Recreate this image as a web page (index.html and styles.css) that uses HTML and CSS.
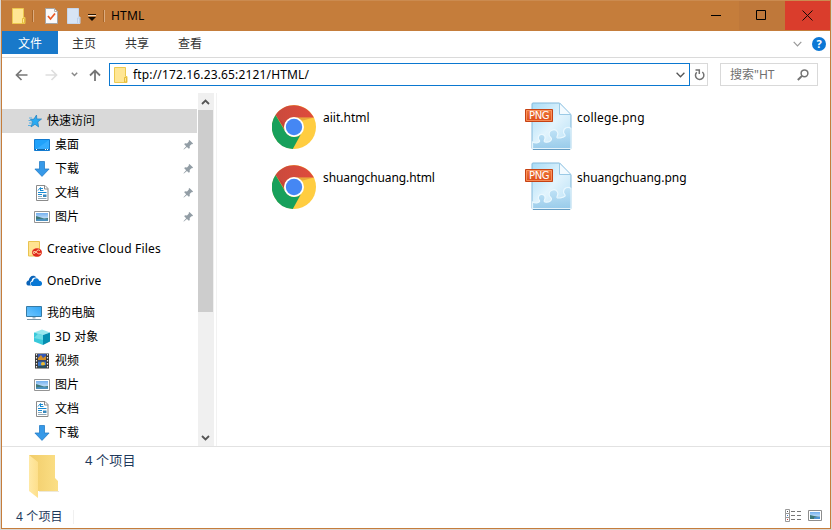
FILE: index.html
```
<!DOCTYPE html>
<html lang="zh-CN">
<head>
<meta charset="utf-8">
<title>HTML</title>
<link rel="stylesheet" href="styles.css">
</head>
<body>
<svg class="defs" aria-hidden="true">
  <defs>
    <linearGradient id="gFolder" x1="0" x2="1"><stop offset="0" stop-color="#f1cc69"/><stop offset="1" stop-color="#fbdf86"/></linearGradient>
    <linearGradient id="gFlap" x1="0" x2="1"><stop offset="0" stop-color="#ffe9a6"/><stop offset="1" stop-color="#fddf8b"/></linearGradient>
    <linearGradient id="gPage" x1="0" y1="0" x2="1" y2="1"><stop offset="0" stop-color="#a9dcf7"/><stop offset=".5" stop-color="#e2f4fd"/><stop offset="1" stop-color="#b4def5"/></linearGradient>
    <linearGradient id="gPuzzle" x1="0" y1="0" x2="0" y2="1"><stop offset="0" stop-color="#c0e3f7"/><stop offset="1" stop-color="#93c8e9"/></linearGradient>
    <linearGradient id="gBadge" x1="0" y1="0" x2="0" y2="1"><stop offset="0" stop-color="#f07a3c"/><stop offset="1" stop-color="#dc4b17"/></linearGradient>
    <linearGradient id="gScreen" x1="0" y1="1" x2="1" y2="0"><stop offset="0" stop-color="#72c8ff"/><stop offset="1" stop-color="#2fa4f5"/></linearGradient>
    <linearGradient id="gSky" x1="0" y1="0" x2="0" y2="1"><stop offset="0" stop-color="#73b0ef"/><stop offset="1" stop-color="#e8f4fb"/></linearGradient>
    <linearGradient id="gRed" x1="0" y1="0" x2="1" y2="0"><stop offset="0" stop-color="#c94a3d"/><stop offset="1" stop-color="#e04b3c"/></linearGradient>
  </defs>
  <symbol id="folder" viewBox="0 0 14 16"><path d="M.5.5h11v9h1.500v6H.5z" fill="#ffe694" stroke="#ecc94f"/><path d="M10.500 15V10.500h2V15z" fill="#ffe694" stroke="#e5bd3d"/></symbol>
  <symbol id="star" viewBox="0 0 16 16"><path d="M10.500 2l.3 4 4.700 0-3.700 2.900.8 5-3.600-2.600-4 2.600 1.700-4.700L4.500 6.500l3.500-.4z" fill="#2aaaf2" stroke="#2685c4" stroke-width=".8"/><path d="M3 5h3M2.500 7.500h3M3 10h3M2 12.500h3" stroke="#5aaee0"/></symbol>
  <symbol id="desktop" viewBox="0 0 16 16"><path d="M.5 2.500h15v11H.5z" fill="#20a2fb" stroke="#137bd0"/><path d="M1 13L15 3v10z" fill="#35adff"/><path d="M1 12.500h14" stroke="#1267a8"/><path d="M2 12.500h1M11 12.500h1M13 12.500h1" stroke="#fff"/></symbol>
  <symbol id="down" viewBox="0 0 16 16"><path d="M5.500.5h5v7.500h4.600L8 15.400.9 8h4.600z" fill="#3699e8" stroke="#277dc7" stroke-width=".8"/></symbol>
  <symbol id="doc" viewBox="0 0 16 16"><path d="M2.500.5h8.500l3 3v12H2.500z" fill="#fff" stroke="#8b8b8b"/><path d="M10.500.5V4H14" fill="none" stroke="#8b8b8b"/><path d="M7 3.500h2M6.500 5.500h3M4 7.500h8.500M4 9.500h4" stroke="#198bd3"/><path d="M4 5.500l2.500-3v3.500" fill="none" stroke="#198bd3"/><path d="M4 11.500h4M4 13.500h8.500" stroke="#8fa8b8"/><path d="M9 9.500h3.500v2.500H9z" fill="#3988bd"/></symbol>
  <symbol id="photo" viewBox="0 0 16 16"><path d="M.5 2.500h15v11H.5z" fill="#fff" stroke="#949494"/><path d="M2 4h12v8H2z" fill="url(#gSky)"/><path d="M2 7l4 1.200 4 1.300 4-.6V12H2z" fill="#3f7878"/><path d="M2 10.500q6-1.500 12 0V12H2z" fill="#4c91bf"/></symbol>
  <symbol id="ccloud" viewBox="0 0 16 16"><path d="M2.500.5h11v14.500h-11z" fill="#ffe391" stroke="#e9c350"/><ellipse cx="11" cy="11.500" rx="5" ry="4.200" fill="#df291d"/><path d="M14 9.500q-2-1.500-3.500.5l-1.200 2q-1.300 1-2.200 0 .1-2.500 2.700-1.200l2.500 2q2.400.7 2.700-1.100" fill="none" stroke="#ffd4a2" stroke-width="1"/></symbol>
  <symbol id="onedrive" viewBox="0 1 16 16"><path d="M3 13.500C-.5 13.500-.4 9 2.700 8.500 3 4.500 7.500 1.700 10.500 5.500 6.800 5 5.600 7 5.700 8.700 3.800 9.500 3.700 12 5 13.500z" fill="#0a63b8"/><path d="M6.500 14c-2.800-.8-2.300-4.200.5-4.400.3-4.200 5.200-4.400 6.200-.9 3.700.2 3.700 4.900.5 5.300z" fill="#0878d5"/></symbol>
  <symbol id="pc" viewBox="0 0 16 16"><path d="M.5 1.500h15v10H.5z" fill="url(#gScreen)" stroke="#367ba5"/><path d="M6.500 12h3v1.500h-3z" fill="#a1b4c0"/><path d="M1 14.500h14" stroke="#7894a6"/></symbol>
  <symbol id="cube" viewBox="0 0 16 16"><path d="M0 3.500L8 .5l8 3L9 6z" fill="#9ae9ef"/><path d="M0 3.500L9 6v10l-9-3.500z" fill="#39c9db"/><path d="M9 6l7-2.500v9L9 16z" fill="#058fb1"/><path d="M0 9l4-4.200L9 6v5z" fill="#6edce6"/></symbol>
  <symbol id="film" viewBox="0 0 16 16"><path d="M1 .5h14v15H1z" fill="#383838"/><path d="M4 1h8v6.500H4z" fill="#3258b7"/><path d="M4 8.500h8V15H4z" fill="#3975cc"/><path d="M4 5l3-3 2 3 3-2v4H4z" fill="#d08d26"/><circle cx="9" cy="11" r="2" fill="#f0bd2f"/><path d="M4 13l8-1v3H4z" fill="#284f60"/><path d="M2.500 1v14M13.500 1v14" stroke="#eee" stroke-width="1.200" stroke-dasharray="1.500 1.500"/></symbol>
  <symbol id="pin" viewBox="0 0 12 12"><path d="M7 1l4 4-1 .8-.8-.1-1.900 2 .1 2.100-1 .9L4.300 8.600 1 11.500l-.5-.4L3.500 7.800 1.300 5.600l.9-.9 2.200.1 2-2L6.200 1.800z" fill="#929da5"/></symbol>
  <symbol id="chrome" viewBox="0 0 44 44"><circle cx="22" cy="22" r="22" fill="#ffcd41"/><path d="M3.500 10A22 22 0 0 1 40.500 10.500L42 12.500H22a9.500 9.500 0 0 0-9 12.500z" fill="url(#gRed)"/><path d="M3.500 10L13 26q3.500 6 9 6 5 0 7-3l-8.200 15A22 22 0 0 1 3.500 10z" fill="#17a05b"/><path d="M22 12.500h20l-13 3.500zM13 26L6 13l6 5z" fill="#a93228" opacity=".25"/><circle cx="22" cy="22" r="10" fill="#fff"/><circle cx="22" cy="22" r="8.200" fill="#4587f4"/></symbol>
  <symbol id="png" viewBox="0 0 48 48"><path d="M8 1h26.500L46 13v33.500q0 .5-1 .5H8q-1 0-1-1V2q0-1 1-1z" fill="url(#gPage)" stroke="#83b9db"/><path d="M7.500 46.500V40q4 2 6.500 0c1.500-1 0-2-.5-3-1.500-6 7.500-6 6.500-.5-.5 1.500-1.500 3 0 3.500 2.500.5 5.500-.5 6.500-2.500.5-1.500-1-2-2-3.500-2-5.500 5.500-8.500 8-4 1.500 3-1 4-.5 5.500.5 1 6 .5 8-1.500 1-1.500-1.500-2-1.500-4 0-4 4.500-6 7.500-3.500v20z" fill="url(#gPuzzle)" opacity=".85" stroke="#eefaff" stroke-width="1.200"/><path d="M34.500 1v11.500H46z" fill="#f4fbff" stroke="#9bcae6"/><path d="M8 47.500h37" stroke="#659dc4"/><path d="M.5 7.500h27v12H.5z" fill="url(#gBadge)" stroke="#c64213"/><path d="M1.500 8.500h25v10h-25z" fill="none" stroke="#ffa572" stroke-width=".7"/></symbol>
</svg>

<div class="window">
  <header class="titlebar">
    <svg class="tb-folder"><use href="#folder"/></svg>
    <i class="tb-sep"></i>
    <svg class="tb-check" viewBox="0 0 13 16"><path d="M.5.5h9l3 3v12H.5z" fill="#fafafa" stroke="#a6a6a6"/><path d="M9.500.5v3h3" fill="none" stroke="#b4b4b4"/><path d="M3 8l2.500 3 4.500-5.500" fill="none" stroke="#e85a27" stroke-width="1.700"/></svg>
    <svg class="tb-blue" viewBox="0 0 14 16"><path d="M.5.500h11v8.500h1.500v6.500H.5z" fill="#d7e4f5" stroke="#c6d6ec"/><path d="M10.500 15v-5h2v5" fill="none" stroke="#bdcfe8"/></svg>
    <svg class="tb-menu" viewBox="0 0 8 8"><path d="M0 1.500h8" stroke="#2c1600"/><path d="M0 2.500h8" stroke="#f0dac5"/><path d="M0 4h8L4 8z" fill="#160b00"/></svg>
    <i class="tb-sep"></i>
    <span class="title">HTML</span>
    <div class="caption">
      <span class="cap"><svg viewBox="0 0 11 11"><path d="M0 5.500h10" stroke="#000"/></svg></span>
      <span class="cap cap-max"><svg viewBox="0 0 11 11"><path d="M.5.5h9v9h-9z" fill="none" stroke="#000"/></svg></span>
      <span class="cap cap-close"><svg viewBox="0 0 11 11"><path d="M.5.5l10 10M10.500.5l-10 10" stroke="#180b08"/></svg></span>
    </div>
  </header>

  <nav class="tabs">
    <span class="tab active">文件</span><span class="tab">主页</span><span class="tab">共享</span><span class="tab">查看</span>
    <svg class="expand" viewBox="0 0 9 6"><path d="M.7.8l3.800 4 3.800-4" fill="none" stroke="#999" stroke-width="1.200"/></svg>
    <span class="help">?</span>
  </nav>

  <div class="navrow">
    <svg class="back" viewBox="0 0 13 12"><path d="M12.500 6H1.500M6.500 1l-5 5 5 5" fill="none" stroke="#777" stroke-width="1.700"/></svg>
    <svg class="forward" viewBox="0 0 13 12"><path d="M.5 6h11M6.500 1l5 5-5 5" fill="none" stroke="#dedede" stroke-width="1.700"/></svg>
    <svg class="recent" viewBox="0 0 7 5"><path d="M.8.8l2.700 2.700L6.200.8" fill="none" stroke="#888" stroke-width="1.500"/></svg>
    <svg class="up" viewBox="0 0 12 12"><path d="M6 12V1.500M1 6.500l5-5 5 5" fill="none" stroke="#777" stroke-width="1.800"/></svg>
    <div class="address"><svg class="addr-icon"><use href="#folder"/></svg><span class="url">ftp://172.16.23.65:2121/HTML/</span><svg class="addr-drop" viewBox="0 0 9 6"><path d="M.6.7l3.900 4 3.900-4" fill="none" stroke="#555" stroke-width="1.300"/></svg></div>
    <div class="refresh"><svg viewBox="0 0 11 12"><path d="M2.800 3.200A4.200 4.200 0 1 0 8.300 3" fill="none" stroke="#727272" stroke-width="1.500"/><path d="M1.500.9h3.800v4" fill="none" stroke="#727272" stroke-width="1.500"/></svg></div>
    <div class="search"><span>搜索"HT</span><svg viewBox="0 0 12 12"><circle cx="7.500" cy="4.300" r="3.400" fill="none" stroke="#737373" stroke-width="1.500"/><path d="M5 6.900L.8 11" stroke="#737373" stroke-width="2"/></svg></div>
  </div>

  <div class="body">
    <aside class="tree">
      <div class="row root selected"><svg><use href="#star"/></svg><span>快速访问</span></div>
      <div class="row"><svg><use href="#desktop"/></svg><span>桌面</span><svg class="pin"><use href="#pin"/></svg></div>
      <div class="row"><svg><use href="#down"/></svg><span>下载</span><svg class="pin"><use href="#pin"/></svg></div>
      <div class="row"><svg><use href="#doc"/></svg><span>文档</span><svg class="pin"><use href="#pin"/></svg></div>
      <div class="row"><svg><use href="#photo"/></svg><span>图片</span><svg class="pin"><use href="#pin"/></svg></div>
      <div class="row root gap"><svg><use href="#ccloud"/></svg><span class="cc">Creative Cloud Files</span></div>
      <div class="row root gap"><svg><use href="#onedrive"/></svg><span class="od">OneDrive</span></div>
      <div class="row root gap"><svg><use href="#pc"/></svg><span>我的电脑</span></div>
      <div class="row"><svg><use href="#cube"/></svg><span class="od">3D 对象</span></div>
      <div class="row"><svg><use href="#film"/></svg><span>视频</span></div>
      <div class="row"><svg><use href="#photo"/></svg><span>图片</span></div>
      <div class="row"><svg><use href="#doc"/></svg><span>文档</span></div>
      <div class="row"><svg><use href="#down"/></svg><span>下载</span></div>
    </aside>
    <div class="scrollbar">
      <svg viewBox="0 0 9 6"><path d="M1 5l3.500-3.500L8 5" fill="none" stroke="#555" stroke-width="1.800"/></svg>
      <i class="thumb"></i>
      <svg class="sb-down" viewBox="0 0 9 6"><path d="M1 1l3.500 3.500L8 1" fill="none" stroke="#555" stroke-width="1.800"/></svg>
    </div>
    <main class="files">
      <div class="file"><svg class="chrome"><use href="#chrome"/></svg><span>aiit.html</span></div>
      <div class="file"><svg class="png"><use href="#png"/><text x="4" y="17" textLength="20.500" lengthAdjust="spacing" class="png-text">PNG</text></svg><span class="wide">college.png</span></div>
      <div class="file"><svg class="chrome"><use href="#chrome"/></svg><span class="tight">shuangchuang.html</span></div>
      <div class="file"><svg class="png"><use href="#png"/><text x="4" y="17" textLength="20.500" lengthAdjust="spacing" class="png-text">PNG</text></svg><span>shuangchuang.png</span></div>
    </main>
  </div>

  <section class="details">
    <svg class="big-folder" viewBox="0 0 32 46"><path d="M1 1h26v23l3 3v10H9z" fill="url(#gFolder)"/><path d="M1 1l9 7v36L1 37z" fill="url(#gFlap)"/><path d="M11 37.500h20" stroke="#ede8da"/></svg>
    <span class="count">4 个项目</span>
  </section>
  <footer class="status">
    <span class="status-text">4 个项目</span>
    <svg class="view-list" viewBox="0 0 16 13"><path d="M.5.5h4v4h-4zM.5 4.500h4v4h-4zM.5 8.500h4v4h-4z" fill="#fff" stroke="#999"/><path d="M6 2.500h4M12 2.500h4M6 6.500h4M12 6.500h4M6 10.500h4M12 10.500h4" stroke="#777"/><path d="M2 2.500h1" stroke="#555"/><path d="M2 6.500h1" stroke="#3b78c5"/><path d="M2 10.500h1" stroke="#c33"/></svg>
    <svg class="view-icon" viewBox="0 0 14 11"><path d="M.5.5h13v10H.5z" fill="#fff" stroke="#8d8d8d"/><path d="M2 2h10v7H2z" fill="url(#gSky)"/><path d="M2 5l4 1 6 1v2H2z" fill="#3d7777"/><path d="M6 7.500l6-1V9H6z" fill="#4f93d2"/></svg>
  </footer>
</div>
</body>
</html>
```
FILE: styles.css
```
* { box-sizing: border-box; }
body {
  margin: 0;
  width: 832px;
  height: 530px;
  overflow: hidden;
  background: #d9d6d3;
  font: 12px/24px "Noto Sans", "Noto Sans CJK SC", sans-serif;
  color: #000;
}
svg { display: block; flex: none; }
span { white-space: nowrap; }
.defs { position: absolute; width: 0; height: 0; }
.png-text { font: 10px "DejaVu Sans", sans-serif; fill: #fff; }

.window {
  display: flex;
  flex-direction: column;
  width: 830px;
  height: 529px;
  margin-left: 1px;
  border: 1px solid #c57d3b;
  border-top: 0;
  background: #fff;
}

.titlebar {
  display: flex;
  align-items: center;
  flex: none;
  height: 31px;
  padding-left: 10px;
  background: #c57d3b;
  border-top: 1px solid #cb8b50;
}
.tb-folder { width: 14px; height: 16px; }
.tb-sep { width: 2px; height: 12px; margin-left: 6px; background: #a86527; border-right: 1px solid #dcac80; }
.tb-check { width: 13px; height: 16px; margin-left: 11px; }
.tb-blue { width: 14px; height: 16px; margin-left: 9px; }
.tb-menu { width: 8px; height: 8px; margin: 2px 1px 0 7px; }
.title { margin-left: 6px; letter-spacing: .2px; }
.caption { display: flex; align-self: stretch; margin-left: auto; }
.cap { display: flex; align-items: center; justify-content: center; width: 46px; height: 29px; }
.cap svg { width: 11px; height: 11px; }
.cap-max { background: #bf783a; padding-right: 2px; }
.cap-close { width: 45px; background: #da3d2c; padding-right: 1px; }

.tabs {
  display: flex;
  flex: none;
  height: 27px;
  border-bottom: 1px solid #dadada;
  color: #333;
}
.tab { width: 53px; height: 23px; line-height: 25px; text-align: center; padding-right: 1px; }
.tab.active { width: 56px; padding-right: 0; background: #1979ca; color: #fff; }
.expand { width: 9px; height: 6px; margin: 10px 10px 0 auto; }
.help {
  width: 14px;
  height: 14px;
  margin: 6px 4px 0 0;
  border-radius: 50%;
  background: #0c78d5;
  color: #fff;
  font-weight: bold;
  font-size: 11px;
  line-height: 14px;
  text-align: center;
}

.navrow { display: flex; flex: none; align-items: center; height: 35px; padding: 0 12px 2px 13px; }
.back, .forward { width: 13px; height: 12px; }
.forward { margin-left: 17px; }
.recent { width: 7px; height: 5px; margin-left: 13px; }
.up { width: 12px; height: 12px; margin-left: 11px; }
.address {
  display: flex;
  align-items: center;
  width: 581px;
  height: 23px;
  margin-left: 8px;
  padding: 0 4px;
  border: 1px solid #0b78d0;
}
.addr-icon { width: 14px; height: 16px; }
.url { margin-left: 5px; letter-spacing: .15px; }
.addr-drop { width: 9px; height: 6px; margin-left: auto; }
.refresh { display: flex; align-items: center; justify-content: center; width: 18px; height: 23px; padding-left: 2px; border: 1px solid #d9d9d9; border-left: 0; }
.refresh svg { width: 11px; height: 12px; }
.search {
  display: flex;
  align-items: center;
  justify-content: space-between;
  width: 98px;
  height: 23px;
  margin-left: auto;
  padding: 0 8px 0 9px;
  border: 1px solid #d9d9d9;
  color: #707070;
}
.search svg { width: 12px; height: 12px; }

.body { display: flex; flex: none; height: 353px; }
.tree { width: 195px; padding-top: 16px; }
.row { display: flex; align-items: center; height: 24px; padding: 0 3px 0 32px; }
.row.root { padding-left: 24px; }
.row.gap { margin-top: 8px; }
.row.selected { background: #d9d9d9; }
.row span { line-height: 22px; }
.row svg { width: 16px; height: 16px; margin-right: 5px; }
.row svg.pin { width: 11px; height: 11px; margin: 0 0 1px auto; }
.row .cc { letter-spacing: .2px; }
.row .od { letter-spacing: .15px; }
.scrollbar {
  display: flex;
  flex-direction: column;
  align-items: center;
  width: 16px;
  margin-left: 1px;
  padding: 6px 0 5px;
  background: #f0f0f0;
}
.scrollbar svg { width: 9px; height: 6px; margin-right: 1px; }
.thumb { width: 15px; height: 202px; margin: 5px 1px 0 0; background: #cdcdcd; }
.scrollbar .sb-down { margin-top: auto; }
.files {
  display: grid;
  grid-template-columns: 254px 254px;
  grid-auto-rows: 60px;
  align-content: start;
  flex: 1;
  margin-left: 2px;
  padding: 7px 0 0 54px;
  border-left: 1px solid #f2f2f2;
}
.file { display: flex; align-items: flex-start; }
.file span { margin-left: 6px; line-height: 20px; padding-top: 8px; }
.chrome { width: 44px; height: 44px; margin: 5px 1px 0 1px; }
.png { width: 48px; height: 48px; margin-top: 2px; }
.file .png + span { margin-left: 4px; }
.file .wide { letter-spacing: .2px; }
.file .tight { letter-spacing: -.1px; }

.details { display: flex; flex: none; height: 57px; border-top: 1px solid #e2e2e2; padding-left: 26px; color: #1e395b; }
.big-folder { width: 32px; height: 46px; margin-top: 7px; }
.count { margin: 1px 0 0 25px; font-size: 13px; letter-spacing: .15px; }
.status { display: flex; align-items: center; flex: 1; padding: 2px 8px 0 14px; color: #1e395b; }
.status-text { padding-right: 10px; line-height: 14px; border-right: 1px solid #f0f0f0; letter-spacing: .15px; }
.view-list { width: 16px; height: 13px; margin: 0 0 2px auto; }
.view-icon { width: 14px; height: 11px; margin: 0 0 2px 7px; }
```
